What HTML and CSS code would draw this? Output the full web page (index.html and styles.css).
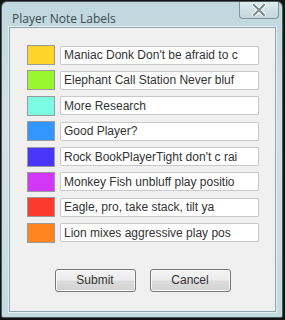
FILE: index.html
```html
<!DOCTYPE html>
<html lang="en">
<head>
  <meta charset="UTF-8" />
  <title>Player Note Labels</title>
  <link rel="stylesheet" href="styles.css">
</head>
<body>

<div class="window">
  <div class="titlebar">
    <span class="title">Player Note Labels</span>
    <button class="close" title="Close">
      <svg width="14" height="12" viewBox="0 0 14 12">
        <path d="M2 1 L12 11 M12 1 L2 11" stroke="#fff" stroke-width="4" stroke-linecap="round"/>
        <path d="M2 1 L12 11 M12 1 L2 11" stroke="#7b8a90" stroke-width="2" stroke-linecap="round"/>
      </svg>
    </button>
  </div>

  <div class="client">
    <div class="labels">
      <div class="row"><span class="swatch s-yellow"></span><input class="note" type="text" value="Maniac Donk Don't be afraid to c"></div>
      <div class="row"><span class="swatch s-lime"></span><input class="note" type="text" value="Elephant Call Station Never bluf"></div>
      <div class="row"><span class="swatch s-aqua"></span><input class="note" type="text" value="More Research"></div>
      <div class="row"><span class="swatch s-blue"></span><input class="note" type="text" value="Good Player?"></div>
      <div class="row"><span class="swatch s-indigo"></span><input class="note" type="text" value="Rock BookPlayerTight don't c rai"></div>
      <div class="row"><span class="swatch s-purple"></span><input class="note" type="text" value="Monkey Fish unbluff play positio"></div>
      <div class="row"><span class="swatch s-red"></span><input class="note" type="text" value="Eagle, pro, take stack, tilt ya"></div>
      <div class="row"><span class="swatch s-orange"></span><input class="note" type="text" value="Lion mixes aggressive play pos"></div>
    </div>

    <div class="actions">
      <button class="btn">Submit</button>
      <button class="btn">Cancel</button>
    </div>
  </div>
</div>

</body>
</html>
```

FILE: styles.css
```css
body { margin:0; background:#141414; font-family:"Liberation Sans", Arial, sans-serif; }

.window {
  box-sizing:border-box;
  width:282px; height:317px;
  margin:1px 0 0 1px;
  border:1px solid #4b5a60; border-radius:6px 6px 2px 2px;
  background:linear-gradient(180deg, #bfd7de 0%, #cfe2e8 40%, #c4dbe2 100%);
  display:flex; flex-direction:column;
  padding:0 6px 5px 7px;
}

/* TITLE BAR */
.titlebar {
  height:25px; display:flex; align-items:flex-start;
  position:relative;
}
.title {
  margin:8px 0 0 3px;
  font-family:"Open Sans", "Liberation Sans", sans-serif;
  font-size:12px; color:#3c4a50;
}
.close {
  position:absolute; top:0; right:-3px;
  width:40px; height:17px; padding:0;
  border:1px solid #7f959c; border-top:none;
  border-radius:0 0 4px 4px;
  background:linear-gradient(180deg, #dfecef, #c2d6dc);
  display:flex; align-items:center; justify-content:center;
}

/* CLIENT AREA */
.client {
  flex:1;
  background:#f0f0f0;
  border:1px solid #8ea6ae;
  box-shadow:0 0 0 1px #e4eff2;
  display:flex; flex-direction:column;
  padding:17px 0 0 17px;
}

.labels { display:flex; flex-direction:column; gap:5.4px; }
.row { display:flex; align-items:center; gap:5px; height:20px; }

.swatch {
  box-sizing:border-box;
  width:28px; height:20px;
  border:1px solid #9a9a9a;
}
.s-yellow { background:#ffd52c; }
.s-lime   { background:#98f72e; }
.s-aqua   { background:#7dfbe2; }
.s-blue   { background:#3396fc; }
.s-indigo { background:#4a35fb; }
.s-purple { background:#d236f7; }
.s-red    { background:#fc3a2e; }
.s-orange { background:#fd8620; }

.note {
  box-sizing:border-box;
  width:199px; height:19px;
  margin:0; padding:0 3px;
  border:1px solid #c9c9c9; border-radius:1px;
  background:#fff; color:#333;
  font-family:"Liberation Sans", Arial, sans-serif; font-size:12px;
  outline:none;
}

.actions {
  display:flex; justify-content:center; gap:14px;
  margin:26px 17px 0 0;
}
.btn {
  width:81px; height:23px; padding:0;
  border:1px solid #767676; border-radius:3px;
  background:linear-gradient(180deg, #f3f3f3 0%, #ececec 48%, #dcdcdc 52%, #d2d2d2 100%);
  box-shadow:inset 0 0 0 1px #fbfbfb;
  color:#333;
  font-family:"Liberation Sans", Arial, sans-serif; font-size:12px;
}
```
